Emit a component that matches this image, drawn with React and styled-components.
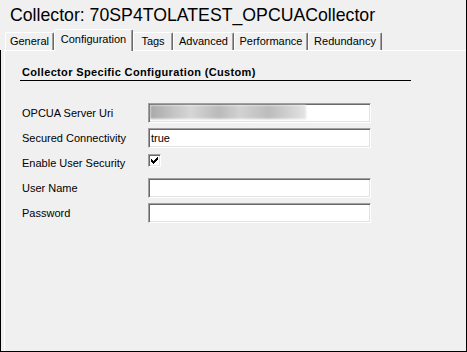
import React from 'react';
import styled, { createGlobalStyle } from 'styled-components';

const GlobalStyle = createGlobalStyle`
  html, body {
    margin: 0;
    padding: 0;
    background: #f0f0f0;
  }
  body {
    font-family: "Liberation Sans", Arial, sans-serif;
    color: #000;
  }
`;

const Window = styled.div`
  width: 467px;
  height: 352px;
  box-sizing: border-box;
  border-right: 1px solid #000;
  background: #f0f0f0;
  display: flex;
  flex-direction: column;
`;

const Title = styled.h1`
  margin: 0;
  padding: 4px 0 0 10px;
  height: 29px;
  box-sizing: border-box;
  font-size: 17.7px;
  font-weight: normal;
  line-height: 22px;
  white-space: nowrap;
`;

/* tab strip sits on top of the panel's white edge */
const TabStrip = styled.div`
  display: flex;
  align-items: flex-end;
  height: 21px;
  padding-left: 5px;
  position: relative;
  z-index: 1;
`;

const Tab = styled.div`
  width: ${p => p.w}px;
  height: ${p => (p.active ? 22 : 18)}px;
  margin-bottom: ${p => (p.active ? -1 : 0)}px;
  box-sizing: border-box;
  background: #f0f0f0;
  border-top: 1px solid #fff;
  border-left: 1px solid #fff;
  border-right: 1px solid #696969;
  box-shadow: inset -1px 0 0 #a0a0a0;
  border-radius: 2px 2px 0 0;
  padding-top: ${p => (p.active ? 1 : 0)}px;
  font-size: 11px;
  line-height: 16px;
  text-align: center;
  white-space: nowrap;
`;

const Panel = styled.div`
  flex: 1;
  border-left: 1px solid #000;
  border-bottom: 1px solid #000;
  padding-left: 3px;
  display: flex;
`;

const Sheet = styled.div`
  flex: 1;
  border-top: 1px solid #fff;
  border-left: 1px solid #fff;
  padding-left: 15px;
`;

const SectionHeader = styled.div`
  margin-top: 14px;
  width: 389px;
  padding-left: 2px;
  border-bottom: 1px solid #000;
  font-size: 11px;
  font-weight: bold;
  letter-spacing: 0.35px;
  line-height: 15px;
`;

const Form = styled.div`
  margin-top: 22px;
  padding-left: 2px;
  display: grid;
  grid-template-columns: 126px 223px;
  grid-auto-rows: 20px;
  row-gap: 5px;
`;

const Label = styled.div`
  font-size: 11px;
  line-height: 20px;
  white-space: nowrap;
`;

const Field = styled.div`
  height: 20px;
  box-sizing: border-box;
  background: #fff;
  border: 1px solid;
  border-color: #a0a0a0 #fff #fff #a0a0a0;
  box-shadow: inset 1px 1px 0 #696969, inset -1px -1px 0 #e3e3e3;
  padding: 1px 0 0 2px;
  font-size: 11px;
  line-height: 16px;
  overflow: hidden;
`;

const Blurred = styled.div`
  width: 156px;
  height: 14px;
  margin-left: -1px;
  background: linear-gradient(
    90deg,
    #a9a9a9 0%,
    #c2c2c2 14%,
    #d6d6d6 26%,
    #bababa 44%,
    #d2d2d2 58%,
    #bcbcbc 76%,
    #d6d6d6 92%,
    #e4e4e4 100%
  );
  filter: blur(1px);
`;

const CheckBox = styled.div`
  width: 13px;
  height: 13px;
  margin-top: 1px;
  box-sizing: border-box;
  background: #fff;
  border: 1px solid;
  border-color: #a0a0a0 #fff #fff #a0a0a0;
  box-shadow: inset 1px 1px 0 #696969, inset -1px -1px 0 #e3e3e3;
  display: flex;
  align-items: center;
  justify-content: center;
`;

// classic 7x7 check mark, one rect per pixel run
const checkRuns = [
  [6, 0, 1], [5, 1, 2], [0, 2, 1], [4, 2, 3],
  [0, 3, 2], [3, 3, 3], [0, 4, 5], [1, 5, 3], [2, 6, 1],
];

const tabs = [
  { label: 'General', w: 49 },
  { label: 'Configuration', w: 79, active: true },
  { label: 'Tags', w: 40 },
  { label: 'Advanced', w: 61 },
  { label: 'Performance', w: 74 },
  { label: 'Redundancy', w: 74 },
];

export default function App() {
  return (
    <>
      <GlobalStyle />
      <Window>
        <Title>Collector: 70SP4TOLATEST_OPCUACollector</Title>
        <TabStrip>
          {tabs.map(t => (
            <Tab key={t.label} w={t.w} active={t.active}>{t.label}</Tab>
          ))}
        </TabStrip>
        <Panel>
          <Sheet>
            <SectionHeader>Collector Specific Configuration (Custom)</SectionHeader>
            <Form>
              <Label>OPCUA Server Uri</Label>
              <Field><Blurred /></Field>

              <Label>Secured Connectivity</Label>
              <Field>true</Field>

              <Label>Enable User Security</Label>
              <div>
                <CheckBox>
                  <svg width="7" height="7" viewBox="0 0 7 7" shapeRendering="crispEdges">
                    {checkRuns.map(([x, y, w]) => (
                      <rect key={`${x}-${y}`} x={x} y={y} width={w} height="1" fill="#000" />
                    ))}
                  </svg>
                </CheckBox>
              </div>

              <Label>User Name</Label>
              <Field />

              <Label>Password</Label>
              <Field />
            </Form>
          </Sheet>
        </Panel>
      </Window>
    </>
  );
}
